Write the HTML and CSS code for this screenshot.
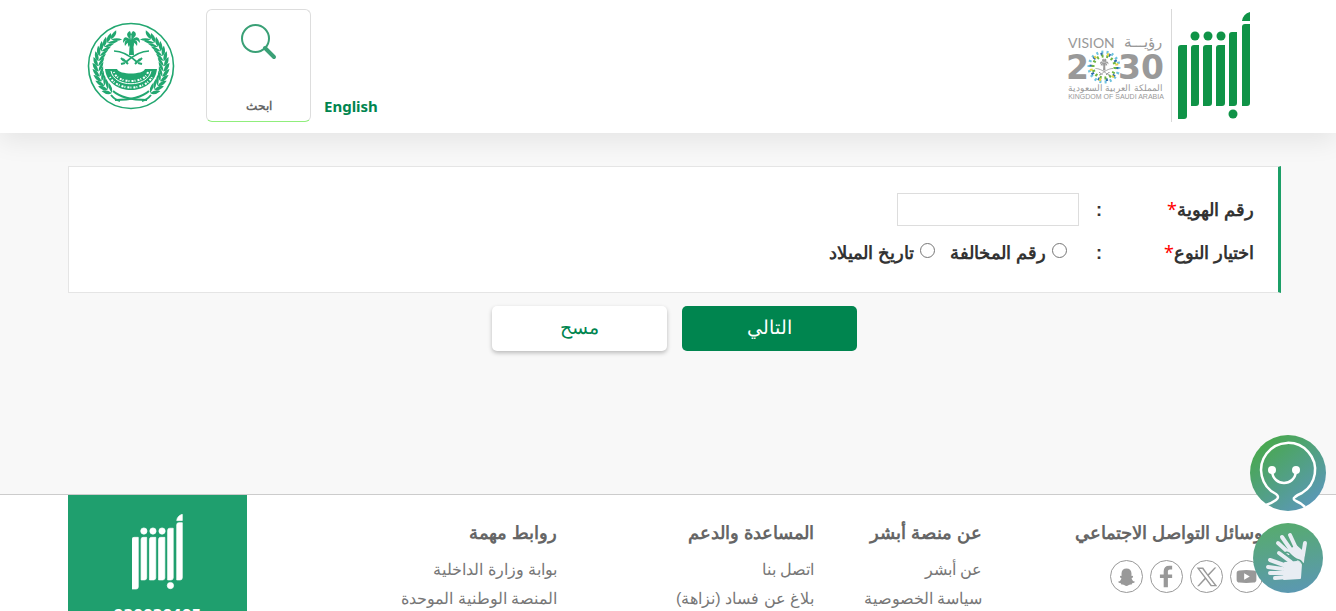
FILE: index.html
```
<!DOCTYPE html>
<html lang="ar" dir="rtl">
<head>
<meta charset="utf-8">
<title>أبشر</title>
<link rel="stylesheet" href="styles.css">
</head>
<body>
<svg class="defs" aria-hidden="true">
  <symbol id="absher" viewBox="0 0 73 108">
    <path d="M0 36q0-3 3-3h6v71q0 3-3 3H0zM13 36q0-3 3-3h5v58q0 3-3 3h-5zM25 36q0-3 3-3h6v58q0 3-3 3h-6zM38 36q0-3 3-3h6v58q0 3-3 3h-6zM51 23q0-3 3-3h5v71q0 3-3 3h-5zM64 15q0-3 3-3h5v79q0 3-3 3h-5zM64 9q1-7 8-9v9z"/>
    <circle cx="17" cy="24" r="4.5"/><circle cx="30" cy="24" r="4.5"/><circle cx="43" cy="24" r="4.5"/><circle cx="55" cy="102" r="4.5"/>
  </symbol>
  <symbol id="palm" viewBox="0 0 40 40">
    <path d="M19 12h3l1 15h-5z"/>
    <path d="M20 12C14 7 12 9 12 15c2-3 4-4 8-3zM20 12c6-5 9-3 9 3-2-3-5-4-9-3zM20 12c-6-1-7 2-6 6 2-3 4-4 6-6zM20 12c6-1 7 2 6 6-2-3-4-4-6-6zM20 12c-5-4-5-7-1-9 1 3 2 5 1 9zM20 12c5-3 7-7 2-9-2 2-3 5-2 9zM20 12c-3 1-4 4-2 7 1-2 2-4 2-7zM20 12c3 1 4 4 2 7-1-2-2-4-2-7z"/>
    <path d="M3 23c5 0 13 2 23 11M38 23c-5 0-13 2-23 11" fill="none" stroke="currentColor" stroke-width="1.7"/>
    <path d="M24 36l5-5M17 36l-5-5M27 35l4 1M14 35l-4 1M28 33l3-3M13 33l-3-3" fill="none" stroke="currentColor" stroke-width="2"/>
  </symbol>
</svg>

<header class="header">
  <a class="brand" href="#" aria-label="أبشر">
    <svg class="brand-absher"><use href="#absher"/></svg>
    <svg class="brand-vision" viewBox="0 0 100 113">
      <text class="v-top" x="2" y="39">VISION</text>
      <text class="v-ar" x="96" y="38" text-anchor="end">رؤيـــة</text>
      <text class="v-num" x="0" y="70">2</text>
      <text class="v-num" x="98" y="70" text-anchor="end">30</text>
      <g fill="none" stroke-width="3">
        <circle cx="38" cy="58" r="15" stroke="#6fc3df" stroke-dasharray="2 3.2"/>
        <circle cx="38" cy="58" r="13" stroke="#2b6cb0" stroke-dasharray="2 6.2"/>
        <circle cx="38" cy="58" r="11" stroke="#6fb544" stroke-dasharray="2 2.9"/>
        <circle cx="38" cy="58" r="13" stroke="#e6d84a" stroke-dasharray="2 11.6" stroke-dashoffset="4"/>
      </g>
      <use class="v-palm" href="#palm" x="28" y="48" width="20" height="20"/>
      <text class="v-sub" x="97" y="82" text-anchor="end">المملكة العربية السعودية</text>
      <text class="v-en" x="50" y="90" text-anchor="middle">KINGDOM OF SAUDI ARABIA</text>
    </svg>
  </a>
  <div class="tools">
    <a class="lang" href="#" lang="en">English</a>
    <button class="search" type="button">
      <svg width="36" height="36" viewBox="0 0 36 36" fill="none" stroke="#3aa076">
        <circle cx="14.5" cy="14.5" r="13.5" stroke-width="2"/>
        <path d="M24 24l9 9" stroke-width="4" stroke-linecap="round"/>
      </svg>
      <span>ابحث</span>
    </button>
    <svg class="emblem" viewBox="0 0 88 88" role="img" aria-label="وزارة الداخلية">
      <defs>
        <path id="leaf" d="M40 11h7M42 11q1-5 9-5-2 5-9 5zM42 11q2 5 9 6-3-5-9-6z"/>
        <g id="branch">
          <use href="#leaf" transform="rotate(-33 44 44)"/><use href="#leaf" transform="rotate(-42 44 44)"/><use href="#leaf" transform="rotate(-51 44 44)"/><use href="#leaf" transform="rotate(-60 44 44)"/><use href="#leaf" transform="rotate(-69 44 44)"/><use href="#leaf" transform="rotate(-78 44 44)"/><use href="#leaf" transform="rotate(-87 44 44)"/><use href="#leaf" transform="rotate(-96 44 44)"/><use href="#leaf" transform="rotate(-105 44 44)"/><use href="#leaf" transform="rotate(-114 44 44)"/><use href="#leaf" transform="rotate(-123 44 44)"/><use href="#leaf" transform="rotate(-132 44 44)"/><use href="#leaf" transform="rotate(-141 44 44)"/>
          <path d="M26 69q10 9 34 9M24 73q4 5 9 6" fill="none" stroke="currentColor" stroke-width="2"/>
        </g>
      </defs>
      <circle cx="44" cy="44" r="42.5" fill="none" stroke="currentColor" stroke-width="1.6"/>
      <use href="#branch"/>
      <use href="#branch" transform="matrix(-1 0 0 1 88 0)"/>
      <use href="#palm" x="24" y="6" width="40" height="40"/>
      <path d="M18 47h12c2 6 26 6 28 0h12c-3 28-49 28-52 0z"/>
      <path d="M24 49c3 17 37 17 40 0" fill="none" stroke="#fff" stroke-width="1"/>
      <path d="M27 50c3 12 31 12 34 0M23 55c7 14 35 14 42 0" fill="none" stroke="#fff" stroke-width="2" stroke-dasharray="1 2 2 1"/>
    </svg>
  </div>
</header>

<main class="main">
  <form>
    <div class="panel">
      <div class="row">
        <label class="name" for="idNumber">رقم الهوية<span class="req">*</span></label>
        <span class="colon">:</span>
        <input class="text-box" type="text" id="idNumber">
      </div>
      <div class="row" role="radiogroup" aria-labelledby="typeName">
        <span class="name" id="typeName">اختيار النوع<span class="req">*</span></span>
        <span class="colon">:</span>
        <div class="options">
          <label><input type="radio" name="type"> رقم المخالفة</label>
          <label><input type="radio" name="type"> تاريخ الميلاد</label>
        </div>
      </div>
    </div>
    <div class="buttons">
      <button class="btn btn-next" type="submit">التالي</button>
      <button class="btn btn-clear" type="reset">مسح</button>
    </div>
  </form>
</main>

<footer class="footer">
  <section>
    <h2>وسائل التواصل الاجتماعي</h2>
    <div class="social">
      <a href="#" aria-label="YouTube"><svg viewBox="0 0 33 33"><path fill-rule="evenodd" d="M9 10q7-1 15 0 3 0 3 3v7q0 3-3 3-8 1-15 0-3 0-3-3v-7q0-3 3-3zM14 13v7l6-3.5z"/></svg></a>
      <a href="#" aria-label="X"><svg viewBox="0 0 33 33"><path fill-rule="evenodd" d="M6 7h7l5 7L25 7h2l-8 8.500L28 27h-7l-5.500-7.500L8.500 27h-2l8-9zM9 8.500L22 25.500h3L12 8.500z"/></svg></a>
      <a href="#" aria-label="Facebook"><svg viewBox="0 0 33 33"><path d="M13.500 28V18H9.500v-3.500h4V11q0-6 6-6h3v4h-2.500q-2 0-2 2v3.500H22.500V18H18v10z"/></svg></a>
      <a href="#" aria-label="Snapchat"><svg viewBox="0 0 33 33"><path d="M16.500 8q5 0 5.300 5v3q1.500-.5 1.700.5t-1.700 2q1 3 3.700 3.500-.2 1.500-3 1.700l-.5 1.300q-2.500-.2-3 .5-1.500 1-2.500 1t-2.500-1q-.5-.7-3-.5l-.5-1.300q-2.800-.2-3-1.700 2.700-.5 3.700-3.500-1.900-1-1.700-2t1.700-.5v-3q.3-5 5.300-5z"/></svg></a>
    </div>
  </section>
  <section>
    <h2>عن منصة أبشر</h2>
    <a href="#">عن أبشر</a>
    <a href="#">سياسة الخصوصية</a>
  </section>
  <section>
    <h2>المساعدة والدعم</h2>
    <a href="#">اتصل بنا</a>
    <a href="#">بلاغ عن فساد (نزاهة)</a>
  </section>
  <section>
    <h2>روابط مهمة</h2>
    <a href="#">بوابة وزارة الداخلية</a>
    <a href="#">المنصة الوطنية الموحدة</a>
  </section>
  <div class="contact">
    <svg><use href="#absher"/></svg>
    <span>920020405</span>
  </div>
</footer>

<div class="floating">
  <button class="assistant" type="button" aria-label="المساعد">
    <svg viewBox="0 0 76 76">
      <linearGradient id="g1" x1="0.200" y1="0.100" x2="0.850" y2="0.900"><stop offset="0" stop-color="#49a850"/><stop offset="1" stop-color="#5b98b8"/></linearGradient>
      <circle cx="38" cy="38" r="38" fill="url(#g1)"/>
      <path d="M16 70q6-2 10-5 4-3 0-6a27 27 0 1 1 26-1q-5 2-7 4-3 2 1 4 5 2 9 6" fill="none" stroke="#fff" stroke-width="2.500"/>
      <path d="M22 36c1 16 23 16 24 0" fill="none" stroke="#fff" stroke-width="2.500"/>
      <circle cx="22" cy="35" r="4" fill="#fff"/><circle cx="46" cy="35" r="4" fill="#fff"/>
    </svg>
  </button>
  <button class="sign" type="button" aria-label="لغة الإشارة">
    <svg viewBox="0 0 70 70">
      <linearGradient id="g2" x1="0.400" y1="0" x2="0.600" y2="1"><stop offset="0" stop-color="#57ab6e"/><stop offset="1" stop-color="#5b98b2"/></linearGradient>
      <circle cx="35" cy="35" r="35" fill="url(#g2)"/>
      <g fill="#e8edf3" stroke="#e8edf3" stroke-linecap="round" stroke-linejoin="round">
        <path d="M25 20l11 10M29 14l9 13M37 12l6 13M52 20l-2 12" fill="none" stroke-width="4"/>
        <path d="M36 28l7-5 8 7-1 9-4-1-8-8z" stroke-width="2"/>
        <path d="M17 37l14 5M15 44l15 2M17 50l14 0M22 55l12-1M26 30l12 9" fill="none" stroke-width="4"/>
        <path d="M32 40l12-1 4 2-1 14-16 1z" stroke-width="2"/>
      </g>
      <path d="M31 31q2-3 5-1 5 6 10 7 3 1 4 5" fill="none" stroke="#55a18a" stroke-width="1.500"/>
    </svg>
  </button>
</div>
</body>
</html>
```
FILE: styles.css
```
* {
    box-sizing: border-box;
}
body {
    margin: 0;
    background-color: #f8f8f8;
    color: #333;
    font-family: "Liberation Sans", sans-serif;
    font-size: 18px;
}
a {
    text-decoration: none;
}
button, input {
    font-family: inherit;
}
button {
    cursor: pointer;
}
.defs {
    display: none;
}

/* header */
.header {
    display: flex;
    justify-content: space-between;
    padding: 9px 85px 11px 87px;
    background-color: #fff;
    box-shadow: 0 8px 24px rgba(0, 0, 0, 0.08);
}
.brand {
    display: flex;
    gap: 6px;
}
.brand-absher {
    width: 73px;
    height: 108px;
    margin-top: 3px;
    fill: #0f9347;
}
.brand-vision {
    width: 106px;
    height: 113px;
    padding-right: 5px;
    border-right: 1px solid #d9d9d9;
    direction: ltr;
    fill: #999;
    color: #999;
}
.v-top {
    font: 14px Lato, sans-serif;
}
.v-ar {
    font-size: 15px;
}
.v-num {
    font: bold 33px "DejaVu Sans", sans-serif;
}
.v-sub {
    font-size: 9px;
}
.v-en {
    font: 7px "Liberation Sans", sans-serif;
}
.tools {
    display: flex;
    align-items: flex-start;
}
.lang {
    align-self: flex-end;
    margin-bottom: 5px;
    color: #00854f;
    font: bold 15px/22px "Noto Sans", sans-serif;
}
.search {
    display: flex;
    flex-direction: column;
    align-items: center;
    justify-content: space-between;
    width: 105px;
    height: 113px;
    margin: 0 13px 0 31px;
    padding: 14px 0 8px;
    background-color: #fff;
    border: 1px solid #ddd;
    border-bottom-color: #90ee7c;
    border-radius: 6px;
    color: #666;
    font-size: 12px;
    font-weight: bold;
}
.emblem {
    width: 88px;
    height: 88px;
    margin-top: 13px;
    color: #22a770;
    fill: #22a770;
}

/* form */
.main {
    min-height: 361px;
    padding: 33px 55px 0 68px;
}
.panel {
    display: grid;
    gap: 10px;
    padding: 26px 24px 23px;
    background-color: #fff;
    border: 1px solid #e5e5e5;
    border-right: 3px solid #1c9f67;
}
.row {
    display: grid;
    grid-template-columns: 152px 23px 1fr;
    align-items: center;
    min-height: 33px;
    font-weight: bold;
    line-height: 20px;
}
.req {
    color: #f00;
    font-family: "Noto Sans", sans-serif;
    font-weight: normal;
}
.text-box {
    width: 182px;
    height: 33px;
    border: 1px solid #ddd;
}
.options {
    display: flex;
    gap: 15px;
    padding-right: 12px;
}
.options label {
    display: flex;
    align-items: center;
    gap: 6px;
}
.options input {
    width: 15px;
    height: 15px;
    margin: 0 0 4px;
}
.buttons {
    display: flex;
    justify-content: center;
    gap: 15px;
    margin-top: 13px;
}
.btn {
    width: 175px;
    height: 45px;
    padding-bottom: 4px;
    border: 0;
    border-radius: 5px;
    font-size: 19px;
}
.btn-next {
    background-color: #00854f;
    color: #fff;
}
.btn-clear {
    background-color: #fff;
    color: #00854f;
    box-shadow: 0 2px 4px rgba(0, 0, 0, 0.25);
}

/* footer */
.footer {
    display: grid;
    grid-template-columns: 281fr 168fr 257fr 310fr 179px;
    padding: 0 73px 0 68px;
    background-color: #fff;
    border-top: 1px solid #ccc;
}
.footer section {
    padding-top: 24px;
    white-space: nowrap;
}
.footer h2 {
    margin: 0 0 8px;
    color: #666;
    font-size: 18px;
    line-height: 28px;
}
.footer section > a {
    display: block;
    color: #777;
    font-size: 16px;
    line-height: 29px;
}
.social {
    display: flex;
    gap: 7px;
    padding-top: 5px;
}
.social a {
    width: 33px;
    height: 33px;
    border: 1px solid #999;
    border-radius: 50%;
}
.social svg {
    display: block;
    fill: #999;
}
.contact {
    display: flex;
    flex-direction: column;
    align-items: center;
    gap: 12px;
    padding: 19px 0 16px;
    background-color: #1f9f6e;
    color: #fff;
    font: bold 14px/24px "DejaVu Sans", sans-serif;
}
.contact svg {
    width: 51px;
    height: 76px;
    fill: #fff;
    stroke: #fff;
}

/* floating buttons */
.floating {
    position: fixed;
    right: 10px;
    bottom: 18px;
    display: flex;
    flex-direction: column;
    align-items: center;
    gap: 12px;
}
.floating button {
    padding: 0;
    background: none;
    border: 0;
}
.floating svg {
    display: block;
}
.assistant {
    width: 76px;
}
.sign {
    width: 70px;
}
```
